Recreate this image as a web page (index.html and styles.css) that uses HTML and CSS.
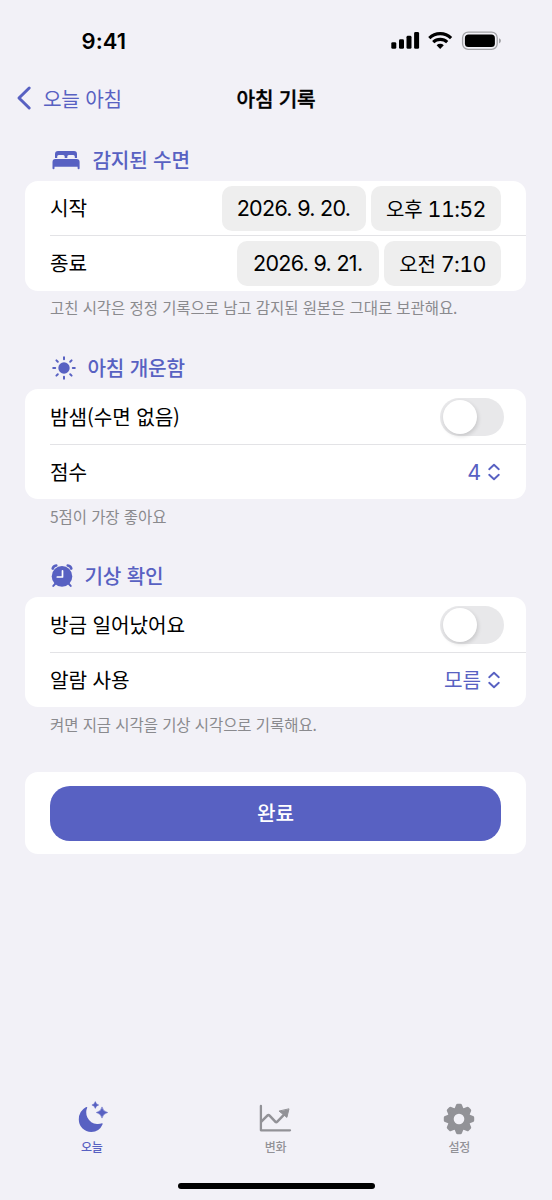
FILE: index.html
```html
<!DOCTYPE html>
<html lang="ko">
<head>
<meta charset="utf-8">
<meta name="viewport" content="width=device-width">
<title>아침 기록</title>
<link rel="stylesheet" href="styles.css">
</head>
<body>
<div class="screen">
  <header class="status">
    <time class="clock">9:41</time>
    <svg class="status-icons" viewBox="0 0 112 24" width="112" height="24">
      <g fill="#000"><rect x="1.3" y="14.2" width="5" height="6.6" rx="1.4"/><rect x="9" y="11.3" width="5" height="9.5" rx="1.4"/><rect x="16.5" y="7.8" width="5" height="13" rx="1.4"/><rect x="24.1" y="4" width="5" height="16.8" rx="1.4"/></g>
      <g fill="none" stroke="#000" stroke-width="3.1"><path d="M39.3 10.1a15.5 15.5 0 0 1 21.8 0"/><path d="M43.2 14.2a10.2 10.2 0 0 1 14 0"/></g>
      <path d="M50.2 20.9l-3.6-3.7a5.2 5.2 0 0 1 7.2 0z"/>
      <rect x="72.6" y="4.1" width="34.6" height="17.3" rx="5.6" fill="none" stroke="#a2a2a6" stroke-width="1.3"/>
      <rect x="74.9" y="6.4" width="30" height="12.7" rx="3.6"/>
      <path d="M109 10.2q2 .7 2 2.6t-2 2.6z" fill="#a2a2a6"/>
    </svg>
  </header>
  <nav class="navbar">
    <a class="back"><svg viewBox="0 0 16 26" width="16" height="26"><path d="M13.2 3L3 13l10.2 10" fill="none" stroke="currentColor" stroke-width="3" stroke-linecap="round" stroke-linejoin="round"/></svg><span>오늘 아침</span></a>
    <h1>아침 기록</h1>
  </nav>
  <main>
    <section>
      <h2><svg class="bed" viewBox="0 0 28 20" width="28" height="20" fill="currentColor"><path d="M3 8V4.200Q3 1 6 1h16q3 0 3 3.200V8h-2.200V6.500q0-1.500-1.500-1.500h-4.500q-1.500 0-1.500 1.500V8h-2.600V6.500q0-1.500-1.500-1.500H6.700q-1.500 0-1.500 1.500V8z"/><path d="M3.400 8.900h21.200q3 0 3 3v6.300q0 1-1 1t-1-1v-1.500H2.500v1.500q0 1-1 1t-1-1v-6.300q0-3 2.900-3z"/></svg><span>감지된 수면</span></h2>
      <div class="card">
        <div class="row"><span class="label">시작</span><div class="pills"><span class="pill date">2026. 9. 20.</span><span class="pill time"><span class="ko">오후</span> 11:52</span></div></div>
        <div class="row"><span class="label">종료</span><div class="pills"><span class="pill date-b">2026. 9. 21.</span><span class="pill time-b"><span class="ko">오전</span> 7:10</span></div></div>
      </div>
      <p class="note">고친 시각은 정정 기록으로 남고 감지된 원본은 그대로 보관해요.</p>
    </section>
    <section>
      <h2><svg class="sun" viewBox="0 0 24 24" width="24" height="24"><circle cx="12" cy="12" r="5.700" fill="currentColor"/><g stroke="currentColor" stroke-width="2" stroke-linecap="round"><path d="M12 1.200v2M12 20.800v2M1.200 12h2M20.800 12h2M4.400 4.400l1.400 1.400M18.200 18.200l1.400 1.400M4.400 19.600l1.400-1.400M18.200 5.800l1.400-1.400"/></g></svg><span>아침 개운함</span></h2>
      <div class="card controls">
        <div class="row"><span class="label">밤샘(수면 없음)</span><span class="toggle"></span></div>
        <div class="row"><span class="label">점수</span><span class="picker"><span class="num">4</span><svg viewBox="0 0 14 18" width="14" height="18"><path d="M2.200 6.200L7 1.800l4.800 4.400M2.200 11.800L7 16.200l4.800-4.400"/></svg></span></div>
      </div>
      <p class="note low">5점이 가장 좋아요</p>
    </section>
    <section>
      <h2><svg class="alarm" viewBox="0 0 22 24" width="22" height="24"><g fill="none" stroke="currentColor" stroke-linecap="round"><path d="M1.700 4.600Q2.300 2 5.300 1.500M20.300 4.600Q19.700 2 16.700 1.500" stroke-width="2.600"/><path d="M4.500 19.500l-2.200 2.400M17.500 19.500l2.200 2.400" stroke-width="2"/></g><circle cx="11" cy="12.400" r="10.300" fill="currentColor"/><path d="M11.500 6.800v6.200H6.300" fill="none" stroke="#fff" stroke-width="1.700" stroke-linecap="round" stroke-linejoin="round"/></svg><span>기상 확인</span></h2>
      <div class="card controls">
        <div class="row"><span class="label">방금 일어났어요</span><span class="toggle"></span></div>
        <div class="row"><span class="label">알람 사용</span><span class="picker"><span class="label">모름</span><svg viewBox="0 0 14 18" width="14" height="18"><path d="M2.200 6.200L7 1.800l4.800 4.400M2.200 11.800L7 16.200l4.800-4.400"/></svg></span></div>
      </div>
      <p class="note low">켜면 지금 시각을 기상 시각으로 기록해요.</p>
    </section>
    <div class="card action"><button class="done">완료</button></div>
  </main>
  <footer class="tabs">
    <a class="tab active"><svg viewBox="0 0 32 32" width="32" height="32" fill="currentColor"><path d="M11.300 4.600Q9 9.500 11.400 14.500Q14.500 20.500 21 21Q23.700 21.200 26 20.300Q27 20.200 26.500 21.500Q23.300 28.900 15.300 28.900Q10 28.900 6.300 25.200Q2.800 21.700 2.800 16.400Q2.800 8 9.800 4.200Q11.300 3.500 11.300 4.600z"/><path d="M26 3.900q.9 4.500 5.700 5.600q-4.800 1.100-5.700 5.600q-.9-4.500-5.700-5.600q4.800-1.100 5.700-5.600z M19.300-1.400q.6 2.800 3.400 3.400q-2.800.6-3.400 3.400q-.6-2.800-3.400-3.400q2.800-.6 3.400-3.400z" stroke="currentColor" stroke-width=".5"/></svg><span>오늘</span></a>
    <a class="tab"><svg viewBox="0 0 32 32" width="32" height="32" fill="none" stroke="currentColor" stroke-linecap="round" stroke-linejoin="round"><path d="M1.900 3v24.300H31" stroke-width="2.300"/><path d="M2.300 18.700l6.300-6.400Q9.600 11.500 10.600 12.600l5.700 6.100Q17.300 19.600 18.300 18.600l7.500-7.700" stroke-width="2.500"/><path d="M29.900 6.200l-2 8.200-7.600-6.100z" fill="currentColor" stroke-width="1"/></svg><span>변화</span></a>
    <a class="tab"><svg viewBox="-16 -16 32 32" width="32" height="32"><g fill="currentColor"><path id="tooth" d="M-5-9L-3-14Q-2.600-15.200-1.400-15.200h2.800Q2.600-15.200 3-14L5-9V9L3 14Q2.600 15.200 1.400 15.200h-2.800Q-2.600 15.200-3 14L-5 9z"/><use href="#tooth" transform="rotate(45)"/><use href="#tooth" transform="rotate(90)"/><use href="#tooth" transform="rotate(135)"/><circle r="11.200"/></g><circle r="5.300" fill="#f2f1f7"/></svg><span>설정</span></a>
  </footer>
  <div class="home"></div>
</div>
</body>
</html>
```
FILE: styles.css
```css
* { box-sizing: border-box; }
body {
  margin: 0;
  background: #f2f1f7;
  color: #000;
  font-family: "Noto Sans CJK KR", sans-serif;
  font-size: 20.2px;
  letter-spacing: -.1px;
}
svg { overflow: visible; flex: none; display: block; }
.screen { width: 552px; height: 1200px; display: flex; flex-direction: column; }
.status { height: 70px; padding: 12px 50px 0 81.500px; display: flex; justify-content: space-between; }
.clock { font: 600 22px/58px Inter, sans-serif; letter-spacing: .1px; }
.status-icons { margin-top: 16px; }
.navbar { height: 56px; display: grid; grid-template-columns: 1fr auto 1fr; align-items: center; }
.back { display: flex; align-items: center; gap: 11px; padding-left: 16px; color: #5861c2; }
.back span { letter-spacing: -.2px; }
h1 { margin: 0; font-size: 20.2px; font-weight: 500; letter-spacing: -.2px; -webkit-text-stroke: .35px #000; }
main { padding: 18px 26px 0 25px; flex: 1; }
h2 { margin: 0; height: 37px; padding: 0 0 4px 27px; display: flex; align-items: center; font-size: 20.2px; font-weight: 500; color: #5861c2; line-height: 30px; letter-spacing: -.2px; }
h2 span { padding-bottom: 2px; }
h2 svg { margin-bottom: 1px; }
.bed + span { margin-left: 12.500px; }
.sun + span { margin-left: 11.500px; }
h2 .alarm { margin-left: -1px; }
.alarm + span { margin-left: 11.500px; }
.card { background: #fff; border-radius: 13px; }
.row { height: 55px; margin-left: 25px; padding-right: 25px; display: flex; align-items: center; justify-content: space-between; line-height: 30px; }
.row:first-child { border-bottom: 1px solid #e3e3e6; }
.controls .row:first-child { height: 56px; padding-top: 1px; }
.controls .row:last-child { height: 54px; }
.label { padding-bottom: 1px; }
.controls .label { padding-bottom: 0; }
.pills { display: flex; gap: 5.500px; }
.pill { height: 45px; border-radius: 10px; background: #eee; font-family: Inter, "Noto Sans CJK KR", sans-serif; font-size: 21.500px; line-height: 45px; text-align: center; white-space: pre; letter-spacing: -.7px; }
.ko { font-family: "Noto Sans CJK KR", sans-serif; font-size: 20px; letter-spacing: -.2px; }
.date { width: 144px; }
.time { width: 130px; }
.date-b { width: 141.500px; }
.time-b { width: 117px; }
.time, .time-b { font-variant-numeric: tabular-nums; letter-spacing: -.65px; }
.note { margin: 0; height: 65px; padding: 4px 25px 0; font-size: 15.500px; line-height: 24px; letter-spacing: -.07px; color: #8a8a8e; white-space: nowrap; }
.low { padding-top: 5px; }
section { height: 208.200px; }
.toggle { width: 64px; height: 38px; margin-right: -3px; border-radius: 19px; background: #e8e8ea; padding: 2px 2.500px; }
.toggle::before { content: ""; display: block; width: 34px; height: 34px; border-radius: 50%; background: #fff; box-shadow: 1px 2px 4px rgba(0,0,0,.15); }
.picker { display: flex; align-items: center; gap: 6px; color: #5861c2; }
.picker svg { fill: none; stroke: currentColor; stroke-width: 1.900; stroke-linecap: round; stroke-linejoin: round; }
.num { font-family: Inter, sans-serif; font-size: 21.500px; }
.action { height: 82.500px; margin-top: 3px; padding: 14px 25px 13.500px; }
.done { display: block; width: 100%; height: 55px; padding: 0; border: 0; border-radius: 20px; background: #5861c2; color: #fff; font: 500 20.200px/52px "Noto Sans CJK KR", sans-serif; }
.tabs { display: grid; grid-template-columns: repeat(3, 1fr); height: 80px; margin-right: 1px; }
.tab { display: flex; flex-direction: column; align-items: center; color: #929297; font-size: 12px; line-height: 18px; font-weight: 500; letter-spacing: -.3px; }
.tab span { margin-top: 3px; }
.active { color: #5861c2; }
.active svg { margin-left: 1px; }
.home { width: 197px; height: 6px; border-radius: 3px; background: #000; margin: 0 auto 11px; }
```
